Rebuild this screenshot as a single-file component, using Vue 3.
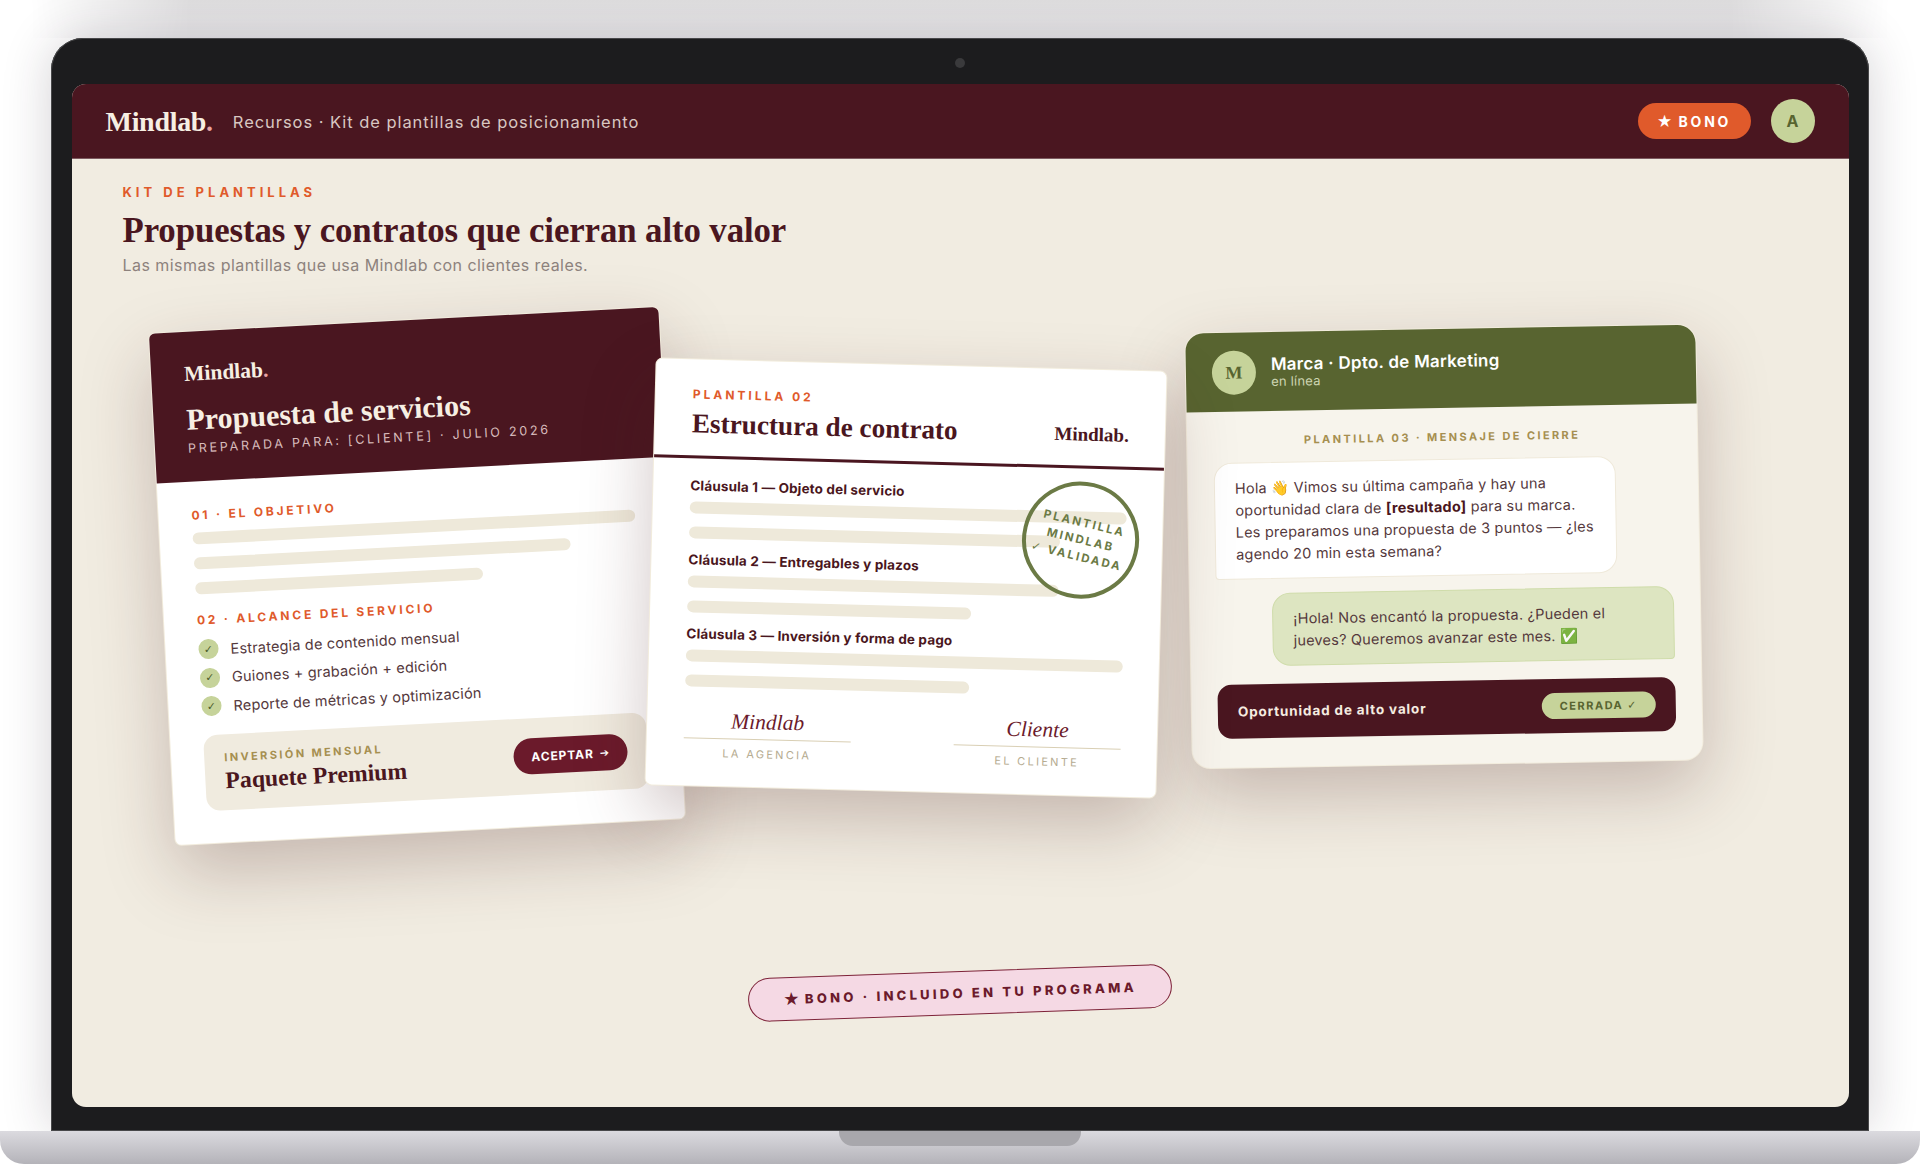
<script setup>
const clauses = [
  { title: 'Cláusula 1 — Objeto del servicio', second: 'w85' },
  { title: 'Cláusula 2 — Entregables y plazos', second: 'w65', first: 'w85' },
  { title: 'Cláusula 3 — Inversión y forma de pago', second: 'w65' }
]
const items = ['Estrategia de contenido mensual', 'Guiones + grabación + edición', 'Reporte de métricas y optimización']
</script>

<template>
  <div class="page">
    <div class="bezel">
      <span class="camera"></span>
      <div class="screen">
        <header class="nav">
          <div class="brand">Mindlab<span class="dot">.</span></div>
          <div class="crumb">Recursos · Kit de plantillas de posicionamiento</div>
          <div class="nav-right">
            <div class="bono"><span class="star">★</span> BONO</div>
            <div class="avatar">A</div>
          </div>
        </header>
        <main class="main">
          <div class="eyebrow">KIT DE PLANTILLAS</div>
          <h1 class="title">Propuestas y contratos que cierran alto valor</h1>
          <p class="subtitle">Las mismas plantillas que usa Mindlab con clientes reales.</p>

          <section class="stage">
            <article class="card proposal">
              <div class="p-head">
                <div class="p-logo">Mindlab<span class="dot">.</span></div>
                <div class="p-title">Propuesta de servicios</div>
                <div class="p-sub">PREPARADA PARA: [CLIENTE] · JULIO 2026</div>
              </div>
              <div class="p-body">
                <div class="p-label">01 · EL OBJETIVO</div>
                <div class="bar first"></div>
                <div class="bar w85"></div>
                <div class="bar w65"></div>
                <div class="p-label second">02 · ALCANCE DEL SERVICIO</div>
                <ul class="checks">
                  <li v-for="item in items" :key="item"><span class="tick">✓</span>{{ item }}</li>
                </ul>
                <div class="invest">
                  <div>
                    <div class="inv-label">INVERSIÓN MENSUAL</div>
                    <div class="inv-value">Paquete Premium</div>
                  </div>
                  <div class="accept">ACEPTAR <span class="arrow">➔</span></div>
                </div>
              </div>
            </article>

            <article class="card contract">
              <div class="c-head">
                <div>
                  <div class="c-label">PLANTILLA 02</div>
                  <div class="c-title">Estructura de contrato</div>
                </div>
                <div class="c-logo">Mindlab.</div>
              </div>
              <div class="c-body">
                <div v-for="c in clauses" :key="c.title" class="clause">
                  <div class="c-clause">{{ c.title }}</div>
                  <div class="bar first" :class="c.first"></div>
                  <div class="bar" :class="c.second"></div>
                </div>
                <div class="signs">
                  <div class="sign">
                    <div class="sign-name">Mindlab</div>
                    <div class="sign-label">LA AGENCIA</div>
                  </div>
                  <div class="sign">
                    <div class="sign-name">Cliente</div>
                    <div class="sign-label">EL CLIENTE</div>
                  </div>
                </div>
              </div>
              <div class="stamp">
                <span>PLANTILLA</span>
                <span>MINDLAB</span>
                <span><i class="glyph">✓</i> VALIDADA</span>
              </div>
            </article>

            <article class="card chat">
              <div class="t-head">
                <div class="t-avatar">M</div>
                <div>
                  <div class="t-name">Marca · Dpto. de Marketing</div>
                  <div class="t-status">en línea</div>
                </div>
              </div>
              <div class="t-body">
                <div class="t-label">PLANTILLA 03 · MENSAJE DE CIERRE</div>
                <div class="bubble in">Hola 👋 Vimos su última campaña y hay una<br>oportunidad clara de <b>[resultado]</b> para su marca.<br>Les preparamos una propuesta de 3 puntos — ¿les<br>agendo 20 min esta semana?</div>
                <div class="bubble out">¡Hola! Nos encantó la propuesta. ¿Pueden el<br>jueves? Queremos avanzar este mes. ✅</div>
                <div class="deal">
                  <span class="deal-text">Oportunidad de alto valor</span>
                  <span class="deal-pill">CERRADA <i class="glyph">✓</i></span>
                </div>
              </div>
            </article>
          </section>

          <div class="ribbon"><span class="r-star">★</span> BONO · INCLUIDO EN TU PROGRAMA</div>
        </main>
      </div>
    </div>
    <div class="base"><span class="notch"></span></div>
  </div>
</template>

<style>
html, body { margin: 0; background: #fff; }
</style>

<style scoped>
* { box-sizing: border-box; }
.page {
  position: relative;
  width: 1920px;
  height: 1164px;
  overflow: hidden;
  background: #fff;
  font-family: Inter, "Liberation Sans", sans-serif;
  display: flex;
  flex-direction: column;
}
.page::before {
  content: "";
  position: absolute;
  left: 0;
  right: 0;
  top: 0;
  height: 38px;
  background: linear-gradient(to bottom, #dfdedf, #e9e8ea);
  -webkit-mask-image: linear-gradient(to right, transparent 30px, #000 190px, #000 1730px, transparent 1890px);
  mask-image: linear-gradient(to right, transparent 30px, #000 190px, #000 1730px, transparent 1890px);
}
.bezel {
  position: relative;
  margin: 38px 51px 0;
  height: 1093px;
  padding: 46px 20.5px 24px;
  background: #1c1c1e;
  border-radius: 32px 32px 0 0;
  box-shadow: inset 0 0 0 1px #48484a, 0 0 50px rgba(40, 30, 45, .2);
}
.camera {
  position: absolute;
  left: 50%;
  top: 20px;
  width: 10px;
  height: 10px;
  margin-left: -5px;
  border-radius: 50%;
  background: #3a3a3c;
}
.screen {
  height: 100%;
  border-radius: 14px;
  overflow: hidden;
  background: #f1ece1;
  display: flex;
  flex-direction: column;
}
.nav {
  height: 75px;
  flex: none;
  padding: 0 34px;
  background: #4a1620;
  border-bottom: 1px solid #7d5a60;
  display: flex;
  align-items: center;
}
.brand {
  margin-top: 2px;
  font: 700 28px/1 "Liberation Serif", serif;
  letter-spacing: -.3px;
  color: #f7efe3;
}
.dot { color: #e8a2a2; }
.crumb {
  margin: 2px 0 0 20px;
  font-size: 16.5px;
  letter-spacing: .95px;
  color: #d9c7c2;
}
.nav-right {
  margin-left: auto;
  display: flex;
  align-items: center;
  gap: 20px;
}
.bono {
  width: 113px;
  height: 36px;
  border-radius: 18px;
  background: #e05a2b;
  color: #fff;
  font-size: 14px;
  font-weight: 700;
  letter-spacing: 2.8px;
  display: flex;
  align-items: center;
  justify-content: center;
  gap: 6px;
}
.star { font-size: 15px; letter-spacing: 0; }
.avatar {
  width: 44px;
  height: 44px;
  border-radius: 50%;
  background: #c6d39a;
  color: #586430;
  font-weight: 700;
  font-size: 16px;
  display: flex;
  align-items: center;
  justify-content: center;
}
.main {
  flex: 1;
  min-height: 0;
  padding: 25px 51px 0;
  display: flex;
  flex-direction: column;
}
.eyebrow {
  font-size: 13px;
  line-height: 16px;
  font-weight: 700;
  letter-spacing: 4px;
  color: #e05a2b;
}
.title {
  margin: 9px 0 0;
  font: 700 34.8px/44px "Liberation Serif", serif;
  letter-spacing: -.1px;
  color: #4a1620;
}
.subtitle {
  margin: 1px 0 0;
  font-size: 16px;
  line-height: 22px;
  letter-spacing: .45px;
  color: #8d827d;
}
.stage {
  margin-top: 24px;
  padding-left: 39.5px;
  height: 532px;
  display: flex;
  align-items: flex-start;
}
.card {
  position: relative;
  flex: none;
  width: 510px;
  background: #fff;
  border-radius: 6px;
  box-shadow: 0 0 0 1px #f2ecdd, 0 28px 70px rgba(74, 30, 32, .26);
}
.proposal { margin-top: 20px; height: 512px; transform: rotate(-3deg); z-index: 1; }
.contract { margin: 65px 0 0 -21px; height: 426px; transform: rotate(1.5deg); z-index: 2; }
.chat {
  margin: 29px 0 0 28px;
  height: 435px;
  transform: rotate(-1deg);
  z-index: 1;
  background: #f7f4ec;
  border-radius: 18px;
}
.p-head {
  height: 150px;
  padding: 30px 33px 0;
  background: #4a1620;
  border-radius: 6px 6px 0 0;
}
.p-logo {
  font: 700 21.5px/24px "Liberation Serif", serif;
  color: #f7efe3;
}
.p-title {
  margin-top: 16px;
  font: 700 30px/36px "Liberation Serif", serif;
  color: #f7efe3;
}
.p-sub {
  margin-top: 3px;
  font-size: 12.5px;
  line-height: 16px;
  letter-spacing: 2.75px;
  color: #d8bcbc;
}
.p-body { padding: 26px 34px 0 33px; }
.p-label {
  font-size: 12px;
  line-height: 16px;
  font-weight: 700;
  letter-spacing: 2.8px;
  color: #e05a2b;
}
.p-label.second { margin-top: 18px; }
.bar {
  height: 12px;
  margin-top: 13px;
  border-radius: 6px;
  background: #eee9da;
}
.bar.first { margin-top: 9px; }
.w85 { width: 85%; }
.w65 { width: 65%; }
.checks {
  list-style: none;
  margin: 11px 0 0;
  padding: 0;
  display: flex;
  flex-direction: column;
  gap: 8.6px;
}
.checks li {
  height: 20px;
  display: flex;
  align-items: center;
  gap: 12px;
  font-size: 14.5px;
  letter-spacing: .18px;
  color: #54383c;
}
.tick {
  width: 20px;
  height: 20px;
  border-radius: 50%;
  background: #c6d39a;
  color: #4a5a28;
  font: 700 11px/1 "DejaVu Sans", sans-serif;
  display: flex;
  align-items: center;
  justify-content: center;
}
.glyph { font-family: "DejaVu Sans", sans-serif; font-style: normal; }
.invest {
  margin-top: 19px;
  height: 76px;
  padding: 0 20px;
  border-radius: 14px;
  background: #f0ebdf;
  display: flex;
  align-items: center;
  justify-content: space-between;
}
.inv-label {
  font-size: 11px;
  line-height: 14px;
  font-weight: 700;
  letter-spacing: 2.4px;
  color: #a68f50;
}
.inv-value {
  margin-top: 2px;
  font: 700 23.7px/28px "Liberation Serif", serif;
  color: #4a1620;
}
.accept {
  width: 114px;
  height: 36px;
  border-radius: 18px;
  background: #6b1a2b;
  color: #fff;
  font-size: 12px;
  font-weight: 700;
  letter-spacing: .9px;
  display: flex;
  align-items: center;
  justify-content: center;
  gap: 6px;
}
.arrow { font-size: 11px; font-family: "DejaVu Sans", sans-serif; }
.c-head {
  height: 99px;
  padding: 28px 36px 0 37px;
  border-bottom: 3px solid #4a1620;
  display: flex;
  justify-content: space-between;
  align-items: flex-end;
}
.c-head > div:first-child { align-self: flex-start; }
.c-label {
  font-size: 12px;
  line-height: 14px;
  font-weight: 700;
  letter-spacing: 3px;
  color: #e05a2b;
}
.c-title {
  margin-top: 4px;
  font: 700 27.2px/36px "Liberation Serif", serif;
  color: #4a1620;
}
.c-logo {
  margin-bottom: 20px;
  font: 700 19px/22px "Liberation Serif", serif;
  color: #4a1620;
}
.c-body { padding: 19px 36px 0 37px; }
.clause { margin-bottom: 13px; }
.c-clause {
  font-size: 13.5px;
  line-height: 17px;
  font-weight: 700;
  letter-spacing: .15px;
  color: #4a1620;
}
.c-clause + .bar { margin-top: 7px; }
.signs {
  margin-top: 17px;
  display: flex;
  justify-content: space-between;
}
.sign { width: 167px; text-align: center; }
.sign-name {
  font: italic 400 21.5px/34px "Liberation Serif", serif;
  color: #6b1a2b;
  border-bottom: 1.5px solid #d9cfb4;
}
.sign-label {
  margin-top: 7px;
  font-size: 11px;
  line-height: 14px;
  letter-spacing: 2.3px;
  color: #b5ab90;
}
.stamp {
  position: absolute;
  left: 370px;
  top: 112px;
  width: 117px;
  height: 117px;
  border: 4px solid #6b7a45;
  border-radius: 50%;
  transform: rotate(12deg);
  color: #6b7a45;
  font-size: 11.5px;
  line-height: 17px;
  font-weight: 700;
  letter-spacing: 2.2px;
  display: flex;
  flex-direction: column;
  align-items: center;
  justify-content: center;
}
.t-head {
  height: 79px;
  padding: 0 26px;
  background: #586430;
  border-radius: 18px 18px 0 0;
  display: flex;
  align-items: center;
  gap: 15px;
}
.t-avatar {
  width: 44px;
  height: 44px;
  border-radius: 50%;
  background: #c6d39a;
  color: #586430;
  font: 700 18px/44px "Liberation Serif", serif;
  text-align: center;
}
.t-name {
  font-size: 17px;
  line-height: 19px;
  font-weight: 600;
  letter-spacing: .25px;
  color: #fff;
}
.t-status {
  font-size: 13px;
  line-height: 14px;
  letter-spacing: .2px;
  color: #cdd5b2;
}
.t-body { padding: 22px 26px 0; display: flex; flex-direction: column; }
.t-label {
  font-size: 11px;
  line-height: 14px;
  font-weight: 700;
  letter-spacing: 2.4px;
  text-align: center;
  color: #a68f50;
}
.bubble {
  width: 402px;
  padding: 13.5px 20px;
  font-size: 14.5px;
  line-height: 22px;
  letter-spacing: .2px;
  white-space: nowrap;
  color: #54383c;
  border-radius: 18px;
}
.bubble b { color: #4a1620; }
.bubble.in {
  margin-top: 15px;
  background: #fff;
  border: 1px solid #efe9da;
  border-bottom-left-radius: 4px;
}
.bubble.out {
  margin-top: 14px;
  align-self: flex-end;
  background: #dde5c1;
  border: 1px solid #cfdcaa;
  border-bottom-right-radius: 4px;
}
.deal {
  margin-top: 18px;
  height: 54px;
  padding: 0 20px;
  border-radius: 14px;
  background: #4a1620;
  display: flex;
  align-items: center;
  justify-content: space-between;
}
.deal-text {
  font-size: 13.5px;
  font-weight: 700;
  letter-spacing: .85px;
  color: #f5ece0;
}
.deal-pill {
  width: 114px;
  height: 26px;
  border-radius: 13px;
  background: #c6d39a;
  color: #586430;
  font-size: 11px;
  font-weight: 700;
  letter-spacing: 1.5px;
  display: flex;
  align-items: center;
  justify-content: center;
  gap: 4px;
}
.ribbon {
  align-self: center;
  margin-top: 139px;
  width: 424px;
  height: 44px;
  border: 1.5px solid #7d2238;
  border-radius: 22px;
  background: #f5d9e4;
  color: #6b1a2b;
  font-size: 13px;
  font-weight: 800;
  letter-spacing: 3.25px;
  display: flex;
  align-items: center;
  justify-content: center;
  gap: 5px;
  transform: rotate(-2deg);
}
.r-star { font-size: 16px; letter-spacing: 0; }
.base {
  position: relative;
  height: 33px;
  background: linear-gradient(to bottom, #dbdadf, #b4b3b9);
  border-radius: 0 0 24px 24px;
  display: flex;
  justify-content: center;
}
.notch {
  width: 242px;
  height: 15px;
  background: #a8a7ac;
  border-radius: 0 0 14px 14px;
}
</style>
